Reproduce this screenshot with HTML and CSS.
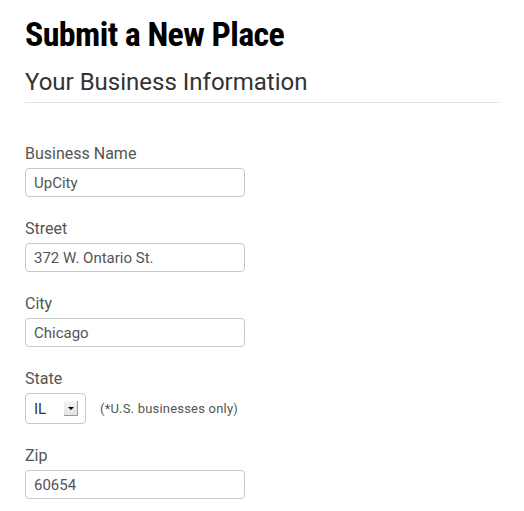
FILE: index.html
```html
<!DOCTYPE html>
<html>
<head>
<meta charset="utf-8">
<link rel="stylesheet" href="styles.css">
</head>
<body>
<div class="page">
  <h1 class="title">Submit a New Place</h1>
  <h2 class="section">Your Business Information</h2>
  <form class="form">
    <div class="field">
      <label class="label">Business Name</label>
      <div class="input">UpCity</div>
    </div>
    <div class="field">
      <label class="label">Street</label>
      <div class="input">372 W. Ontario St.</div>
    </div>
    <div class="field">
      <label class="label">City</label>
      <div class="input">Chicago</div>
    </div>
    <div class="field">
      <label class="label">State</label>
      <div class="row">
        <div class="select">
          <span class="select-value">IL</span>
          <span class="select-btn"><span class="select-arrow"></span></span>
        </div>
        <span class="note">(*U.S. businesses only)</span>
      </div>
    </div>
    <div class="field">
      <label class="label">Zip</label>
      <div class="input">60654</div>
    </div>
  </form>
</div>
</body>
</html>
```

FILE: styles.css
```css
html, body {
  margin: 0;
  padding: 0;
  background: #fff;
}
.page {
  padding: 14px 25px 0 25px;
  font-family: Roboto, "Liberation Sans", sans-serif;
}
.title {
  margin: 0;
  font-family: "Roboto Condensed", "DejaVu Sans Condensed", sans-serif;
  font-weight: bold;
  font-size: 34px;
  letter-spacing: -0.6px;
  line-height: 40px;
  color: #000;
}
.section {
  margin: 14px 0 0 0;
  font-weight: normal;
  font-size: 24px;
  line-height: 28px;
  color: #333;
  padding-bottom: 6px;
  border-bottom: 1px solid #e3e3e3;
}
.form {
  display: flex;
  flex-direction: column;
  gap: 22px;
  margin-top: 41px;
}
.field {
  display: flex;
  flex-direction: column;
}
.label {
  font-size: 16px;
  line-height: 20px;
  color: #555;
  margin-bottom: 4px;
}
.input {
  box-sizing: border-box;
  width: 220px;
  height: 29px;
  border: 1px solid #c8c8c8;
  border-radius: 4px;
  padding: 0 8px;
  font-size: 15px;
  line-height: 28px;
  color: #555;
}
.row {
  display: flex;
  align-items: center;
  gap: 14px;
}
.select {
  box-sizing: border-box;
  width: 61px;
  height: 31px;
  border: 1px solid #c8c8c8;
  border-radius: 4px;
  display: flex;
  align-items: center;
  padding-left: 8px;
  font-size: 15px;
  color: #333;
}
.select-value {
  flex: 1;
}
.select-btn {
  box-sizing: border-box;
  width: 14px;
  height: 15px;
  margin-right: 7px;
  background: linear-gradient(#f4f4f4, #e2e2e2);
  border-right: 1px solid #9a9a9a;
  border-bottom: 1px solid #9a9a9a;
  display: flex;
  align-items: center;
  justify-content: center;
}
.select-arrow {
  width: 0;
  height: 0;
  border-left: 3px solid transparent;
  border-right: 3px solid transparent;
  border-top: 3px solid #000;
}
.note {
  font-size: 13px;
  letter-spacing: 0.2px;
  color: #555;
}
```
